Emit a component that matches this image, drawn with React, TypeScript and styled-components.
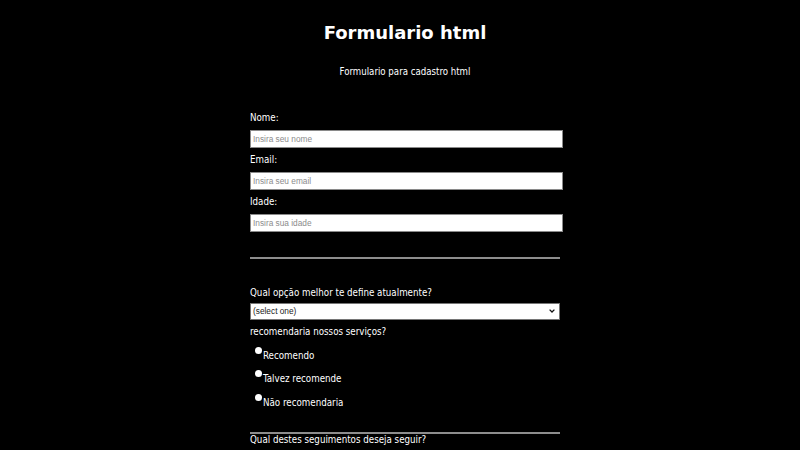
import React from 'react'
import styled, { createGlobalStyle } from 'styled-components'

const GlobalStyle = createGlobalStyle`
  body {
    margin: 0;
    background: #000;
    color: #fff;
    font-family: 'DejaVu Sans Condensed', 'DejaVu Sans', sans-serif;
    font-stretch: condensed;
  }
`

const Page = styled.div`
  min-height: 450px;
  padding-left: 10px;
  overflow: hidden;
`
const Header = styled.header`
  text-align: center;
`
const Title = styled.h1`
  margin: 22px 0 0;
  font-family: 'DejaVu Sans', sans-serif;
  font-stretch: normal;
  font-size: 18px;
  line-height: 22px;
  font-weight: bold;
`
const Subtitle = styled.p`
  margin: 22px 0 0;
  font-size: 9.6px;
  line-height: 12px;
`
const Form = styled.form`
  width: 310px;
  margin: 34px auto 0;
  display: flex;
  flex-direction: column;
`
const Label = styled.label<{ $gap?: number }>`
  display: block;
  font-size: 9.7px;
  line-height: 12px;
  margin-top: ${(p) => p.$gap ?? 0}px;
  margin-bottom: 6px;
`
const TextInput = styled.input`
  box-sizing: border-box;
  width: 313px;
  height: 18px;
  margin: 0;
  padding: 1px 2px;
  border: 1px solid #8a8a8a;
  background: #fff;
  font-family: 'Liberation Sans', Arial, sans-serif;
  font-size: 8.3px;
  &::placeholder {
    color: #8c8c8c;
  }
`
const Divider = styled.hr<{ $top: number; $bottom: number }>`
  width: 310px;
  height: 0;
  margin: ${(p) => p.$top}px 0 ${(p) => p.$bottom}px;
  border: none;
  border-top: 2px solid #8d8d8d;
`
const Question = styled.p<{ $gap?: number }>`
  margin: 0 0 ${(p) => p.$gap ?? 0}px;
  font-size: 9.7px;
  line-height: 12px;
`
const SelectWrap = styled.div`
  position: relative;
  width: 310px;
  margin: 0 0 6px;
`
const Select = styled.select`
  display: block;
  box-sizing: border-box;
  width: 310px;
  height: 17px;
  margin: 0;
  padding: 0 2px;
  border: 1px solid #767676;
  border-radius: 0;
  appearance: none;
  background: #fff;
  color: #222;
  font-family: 'Liberation Sans', Arial, sans-serif;
  font-size: 8.3px;
`
const Chevron = styled.svg`
  position: absolute;
  right: 5px;
  top: 6px;
  width: 6px;
  height: 4px;
  pointer-events: none;
`
const RadioList = styled.div`
  display: flex;
  flex-direction: column;
  gap: 11.5px;
  margin-top: 12px;
`
const RadioRow = styled.label`
  display: flex;
  align-items: flex-start;
  padding-left: 5px;
  font-size: 9.7px;
  line-height: 12px;
`
const RadioDot = styled.input`
  appearance: none;
  width: 7px;
  height: 7px;
  margin: -3px 1px 0 0;
  border: none;
  border-radius: 50%;
  background: #fff;
  flex-shrink: 0;
`

const options = ['Recomendo', 'Talvez recomende', 'Não recomendaria']

export default function App(): React.ReactElement {
  return (
    <Page>
      <GlobalStyle />
      <Header>
        <Title>Formulario html</Title>
        <Subtitle>Formulario para cadastro html</Subtitle>
      </Header>
      <Form>
        <Label htmlFor="nome">Nome:</Label>
        <TextInput id="nome" type="text" placeholder="Insira seu nome" />
        <Label htmlFor="email" $gap={6}>Email:</Label>
        <TextInput id="email" type="email" placeholder="Insira seu email" />
        <Label htmlFor="idade" $gap={6}>Idade:</Label>
        <TextInput id="idade" type="number" placeholder="Insira sua idade" />

        <Divider $top={24.5} $bottom={28} />

        <Question $gap={4}>Qual opção melhor te define atualmente?</Question>
        <SelectWrap>
          <Select defaultValue="">
            <option value="" disabled>(select one)</option>
            <option value="estudante">Estudante</option>
            <option value="profissional">Profissional</option>
          </Select>
          <Chevron viewBox="0 0 6 4">
            <path d="M0.6 0.6 L3 3 L5.4 0.6" fill="none" stroke="#111" strokeWidth="1.3" />
          </Chevron>
        </SelectWrap>
        <Question>recomendaria nossos serviços?</Question>
        <RadioList>
          {options.map((o) => (
            <RadioRow key={o}>
              <RadioDot type="radio" name="recomenda" value={o} />
              {o}
            </RadioRow>
          ))}
        </RadioList>

        <Divider $top={23} $bottom={0} />
        <Question>Qual destes seguimentos deseja seguir?</Question>
      </Form>
    </Page>
  )
}
